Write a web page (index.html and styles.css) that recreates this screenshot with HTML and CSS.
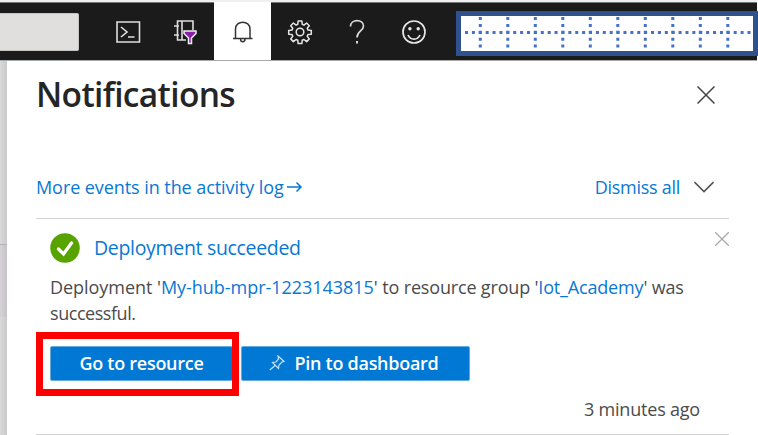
FILE: index.html
```html
<!DOCTYPE html>
<html lang="en">
<head>
<meta charset="utf-8">
<title>Notifications</title>
<link rel="stylesheet" href="styles.css">
</head>
<body>
<header class="topbar">
  <div class="search"></div>
  <nav class="tools">
    <span class="tool"><svg width="58" height="57" viewBox="0 0 58 57" fill="none" stroke="#dedede" stroke-width="1.6"><path d="M18 19h22.500v20H18z"/><path d="M22 24l6 5-6 5M29 34h6.500"/></svg></span>
    <span class="tool"><svg width="58" height="57" viewBox="0 0 58 57" fill="none" stroke="#dedede" stroke-width="1.6"><path d="M37 27V18H21.500v19H30M26 18v19M18 23h5M18 32h5"/><path d="M28 28h12v2.500l-4.500 4.500v5.500h-3v-5.500l-4.500-4.500z" fill="#8a20a8" stroke="#eee" stroke-width="1.500"/></svg></span>
    <span class="tool active"><svg width="58" height="57" viewBox="0 0 58 57" fill="none" stroke="#333" stroke-width="1.500"><path d="M21.500 35V26c0-9 14.500-9 14.500 0v9M19 35.500H38.500M26.500 36c0 3.500 4.500 3.500 4.500 0"/></svg></span>
    <span class="tool"><svg width="58" height="57" viewBox="0 0 58 57" fill="none" stroke="#e6e6e6" stroke-width="1.500" stroke-linejoin="round"><path d="M26.800 21.300L27.100 18h3.800l.3 3.300 1.800.8 2.600-2.100 2.700 2.700-2.100 2.600.8 1.800 3.300.3v3.800l-3.300.3-.8 1.800 2.100 2.600-2.700 2.700-2.600-2.100-1.800.8-.3 3.300h-3.800l-.3-3.300-1.800-.8-2.600 2.100-2.700-2.700 2.100-2.600-.8-1.800-3.300-.3v-3.800l3.300-.3.8-1.800-2.100-2.600 2.700-2.700 2.600 2.100z"/><circle cx="29" cy="29" r="3.800"/></svg></span>
    <span class="tool"><svg width="58" height="57" viewBox="0 0 58 57" fill="none" stroke="#d8d8d8" stroke-width="1.700"><path d="M22.500 23.500c0-8 13-7.500 13-.5 0 5-6.500 5-6.500 11.500"/><path d="M29 38v2.500" stroke-width="2"/></svg></span>
    <span class="tool"><svg width="58" height="57" viewBox="0 0 58 57" fill="none" stroke="#e6e6e6" stroke-width="1.700"><circle cx="29" cy="29" r="11"/><path d="M23 32c2.500 5.500 9.500 5.500 12 0"/><g fill="#e6e6e6" stroke="none"><circle cx="24.900" cy="25.800" r="1.700"/><circle cx="33.200" cy="25.800" r="1.700"/></g></svg></span>
  </nav>
  <div class="account"><svg width="292" height="35" viewBox="461 16 292 35" fill="none" stroke="#4472c4" stroke-width="3"><path d="M465 32.500H751" stroke-dasharray="3 3.890"/><path stroke-dasharray="3 3.890" d="M480.300 17v32M507.800 17v32M535.300 17v32M562.800 17v32M590.300 17v32M617.800 17v32M645.300 17v32M672.800 17v32M700.300 17v32M727.800 17v32"/></svg></div>
</header>
<div class="content">
  <aside class="backdrop"><div class="selected"></div></aside>
  <main class="panel">
    <div class="heading"><h1>Notifications</h1><svg class="close" width="18" height="18" viewBox="0 0 18 18" fill="none" stroke="#444" stroke-width="1.500"><path d="M.5.500l17 17M17.500.500l-17 17"/></svg></div>
    <div class="actions"><a class="events">More events in the activity log</a><svg class="arrow" width="16" height="12" viewBox="0 0 16 12" fill="none" stroke="#0878d4" stroke-width="1.500"><path d="M0 6h14M9.500 1.500L14 6l-4.500 4.500"/></svg><a class="dismiss">Dismiss all</a><svg width="20" height="12" viewBox="0 0 20 12" fill="none" stroke="#555" stroke-width="1.600"><path d="M.5 1l9.500 9.500L19.500 1"/></svg></div>
    <article class="notice">
      <div class="title"><svg width="30" height="30" viewBox="0 0 30 30"><circle cx="15" cy="15" r="14.800" fill="#57a300"/><path d="M8.500 16l5 5 8-11" fill="none" stroke="#fff" stroke-width="3.200" stroke-linecap="round"/></svg><h2>Deployment succeeded</h2><svg class="clear" width="14" height="14" viewBox="0 0 14 14" stroke="#aaa" stroke-width="1.300"><path d="M0 0l14 14M14 0L0 14"/></svg></div>
      <p><span class="line1">Deployment '<a>My-hub-mpr-1223143815</a>' <span class="group">to resource group '<a>Iot_Academy</a>' was</span></span><br><span class="line2">successful.</span></p>
      <div class="buttons"><button class="go"><span>Go to resource</span></button><button class="pin"><svg width="16" height="16" viewBox="0 0 16 16" fill="none" stroke="#c5e2f8" stroke-width="1.200"><path d="M9 1l6 5.500-2 .5-3 3-.5 3.500-6-6L7 7l2.500-3zM6 10.500L.8 15"/></svg><span>Pin to dashboard</span></button></div>
      <time>3 minutes ago</time>
    </article>
  </main>
</div>
<div class="highlight"></div>
</body>
</html>
```
FILE: styles.css
```css
* { box-sizing: border-box; }
body { margin: 0; width: 758px; height: 435px; overflow: hidden; background: #fff; color: #4b4b4b; font: 18px "Open Sans", sans-serif; font-kerning: normal; }
.topbar { display: flex; width: 757px; height: 61px; border-top: 2px solid #efefef; border-bottom: 1px solid #aaa; background: #1b1b1b; box-shadow: inset 0 1px #777; }
.search { width: 79px; height: 38px; margin-top: 11px; background: #e0dfdd; border: 1px solid #c5c4c3; border-left: 0; border-radius: 0 2px 2px 0; flex: none; }
.tools { display: flex; margin-left: 20px; flex: none; }
.tool { width: 57.250px; height: 58px; flex: none; }
.tool svg { display: block; margin-top: 1px; }
.active { background: #fff; }
.account { width: 302px; height: 45px; margin: 9px 0 0 13.500px; border: 5px solid #2f528f; background: #fff; flex: none; }
.account svg { display: block; }
.content { display: flex; height: 374px; }
.backdrop { width: 7px; padding-top: 183px; background: linear-gradient(90deg, #d9d9d9, #cacaca); flex: none; }
.selected { height: 73px; background: linear-gradient(90deg, #d7d1d8, #c7c1c8); border-top: 1px solid #b7afb9; }
.panel { width: 722px; padding-left: 29px; background: #fff; flex: none; }
.heading { display: flex; justify-content: space-between; height: 107px; }
h1 { margin: 10px 0 0; font-size: 33.500px; line-height: 46px; font-weight: 600; color: #252525; letter-spacing: -.65px; }
.close { margin: 25px 14px 0 0; }
.actions { display: flex; align-items: center; height: 51px; border-bottom: 1px solid #d2d2d2; padding: 0 15px 12px 0; }
a { color: #0878d4; }
.events { letter-spacing: -.07px; }
.arrow { margin-left: 3px; }
.dismiss { margin-left: auto; margin-right: 14px; letter-spacing: -.27px; }
.notice { height: 216px; padding-left: 14px; border-bottom: 1px solid #d2d2d2; }
.title { display: flex; height: 58px; padding-top: 14px; }
.clear { margin-top: -1px; }
h2 { margin: 0 auto 0 14px; font-size: 19.500px; line-height: 30px; font-weight: 400; color: #0878d4; letter-spacing: -.32px; }
p { margin: -3px 0 0; line-height: 26px; white-space: nowrap; }
.line1 { letter-spacing: -.04px; }
.group { letter-spacing: -.17px; }
.line2 { letter-spacing: -.45px; }
.buttons { display: flex; gap: 8px; margin-top: 20px; }
button { display: flex; align-items: center; justify-content: center; width: 183px; height: 35px; padding: 0 0 2px; border: 1px solid #62acdf; border-radius: 2px; background: #0078d4; color: #fff; font: 600 18px "Open Sans", sans-serif; letter-spacing: -.27px; }
.pin { width: 229px; gap: 9px; padding-right: 3px; }
time { display: block; margin: 15px 29px 0 0; text-align: right; line-height: 26px; letter-spacing: -.2px; }
.highlight { position: absolute; left: 36px; top: 332px; width: 203px; height: 64px; border: 7px solid #f00; }
```
